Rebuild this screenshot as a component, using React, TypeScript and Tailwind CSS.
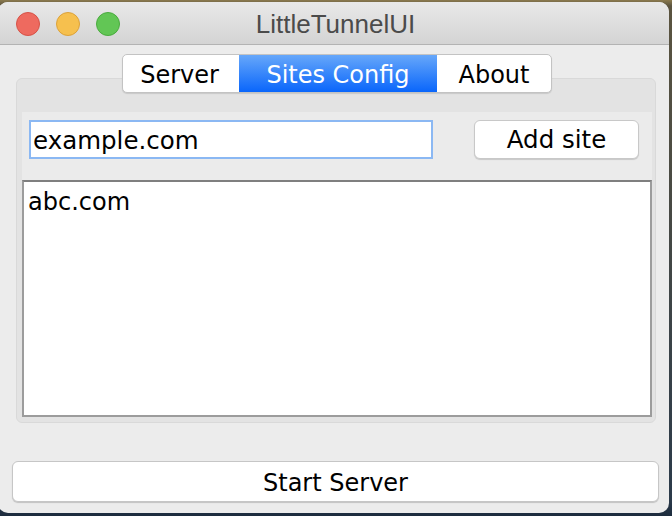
import React from "react";

const ui = { fontFamily: '"DejaVu Sans", "Noto Sans", sans-serif' };

export default function App() {
  return (
    <div className="w-[672px] h-[516px] overflow-hidden bg-[linear-gradient(180deg,#8b7a4e_0px,#5b5440_6px,#2b3a4a_500px,#1d2c3e_516px)]">
      <div className="ml-[-2px] mt-[2px] w-[671px] h-[511px] rounded-[10px] bg-[#ececec] overflow-hidden flex flex-col">
        {/* Title bar */}
        <div className="relative h-[43px] shrink-0 bg-[linear-gradient(180deg,#e9e9e9,#d4d4d4)] border-b border-[#b3b3b3] flex items-center justify-center">
          <div className="absolute left-[18px] top-[10px] flex gap-[16px]">
            <div className="w-[24px] h-[24px] rounded-full bg-[#ee6a5f] border border-[#d65247]" />
            <div className="w-[24px] h-[24px] rounded-full bg-[#f6c04e] border border-[#dca23a]" />
            <div className="w-[24px] h-[24px] rounded-full bg-[#62c655] border border-[#4aab3e]" />
          </div>
          <span
            className="text-[26px] text-[#4b4b4b] leading-none ml-[4px] pt-[2px]"
            style={{ fontFamily: '"Liberation Sans", Arial, sans-serif' }}
          >
            LittleTunnelUI
          </span>
        </div>

        {/* Tabs */}
        <div className="relative z-10 mt-[9px] ml-[124px] flex w-[430px] h-[39px] rounded-[5px] border border-[#c3c3c3] bg-white shadow-[0_1px_1px_rgba(0,0,0,0.12)] overflow-hidden" style={ui}>
          <div className="w-[116px] flex items-center justify-center pt-[3px] pr-[3px] text-[24px] text-black">Server</div>
          <div className="w-[198px] flex items-center justify-center pt-[3px] text-[24px] text-white bg-[linear-gradient(180deg,#66a7fa,#0a66fb)]">Sites Config</div>
          <div className="flex-1 flex items-center justify-center pt-[3px] text-[24px] text-black">About</div>
        </div>

        {/* Tab panel */}
        <div className="mt-[-15px] ml-[18px] w-[640px] h-[345px] rounded-[6px] bg-[#e3e3e3] border border-[#d9d9d9] pt-[33px] pl-[5px] pr-[3px] pb-[5px] flex flex-col" style={ui}>
          <div className="flex-1 bg-[#ebebeb] flex flex-col">
            <div className="flex items-start pt-[8px] pl-[7px]">
              <div className="w-[404px] h-[39px] bg-white border-2 border-[#8bb8f3] flex items-center pl-[2px] pt-[3px] text-[24.5px] text-black leading-none">
                example.com
              </div>
              <div className="ml-[41px] w-[165px] h-[39px] bg-white rounded-[6px] border border-[#c8c8c8] shadow-[0_1px_1px_rgba(0,0,0,0.15)] flex items-center justify-center pt-[1px] text-[24.5px] text-black">
                Add site
              </div>
            </div>
            <div className="mt-[21px] flex-1 bg-white border-2 border-[#9c9c9c] border-t-[#7f7f7f] pl-[4px] pt-[5px] text-[24px] text-black leading-[30px]">
              abc.com
            </div>
          </div>
        </div>

        {/* Start server */}
        <div className="mt-[38px] ml-[14px] w-[647px] h-[41px] bg-white rounded-[6px] border border-[#c6c6c6] shadow-[0_1px_1px_rgba(0,0,0,0.18)] flex items-center justify-center pt-[3px] text-[24px] text-black" style={ui}>
          Start Server
        </div>
      </div>
    </div>
  );
}
